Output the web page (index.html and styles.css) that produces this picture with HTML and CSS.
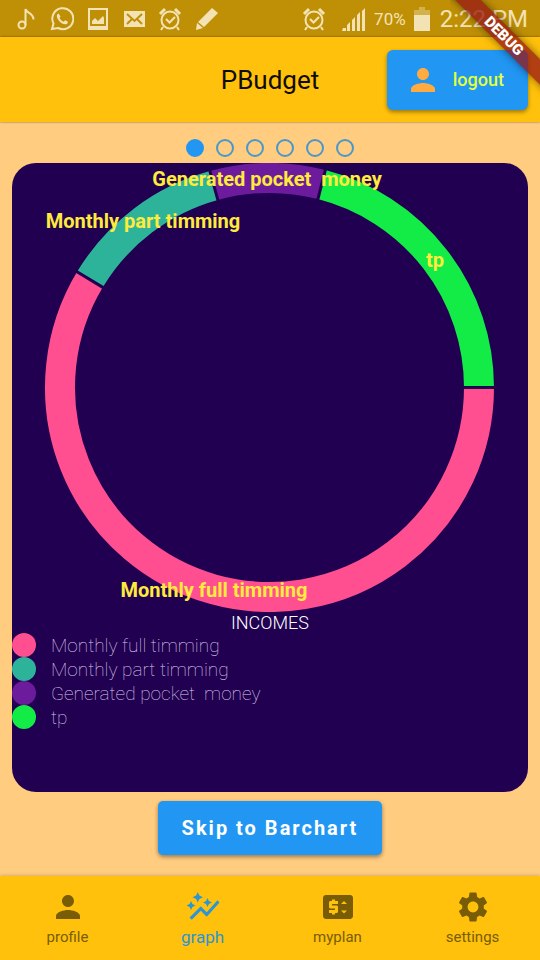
FILE: index.html
```html
<!DOCTYPE html>
<html lang="en">
<head>
<meta charset="utf-8">
<meta name="viewport" content="width=device-width, initial-scale=1">
<title>PBudget</title>
<link rel="stylesheet" href="styles.css">
</head>
<body>
<div class="status">
  <div class="status-left">
    <svg width="24" height="24" viewBox="0 0 24 24"><g fill="none" stroke="currentColor" stroke-width="2"><circle cx="8" cy="18" r="3.500"/><path d="M11.500 18V2c1 4.500 8 3.500 8 10.500"/></g></svg>
    <svg width="24" height="24" viewBox="0 0 24 24"><path d="M2 22l1.500-5.500A10.500 10.500 0 1 1 8 21z" fill="none" stroke="currentColor" stroke-width="2"/><path fill="currentColor" d="M8.500 6.500c-2 .7-2 3-1 4.900 1.700 3.200 4.300 5.500 7.500 5.900 1.700.1 2.900-1 2.900-2.600l-2.700-1.500-1.500 1.500c-2-.7-3.400-2.100-4.200-4l1.100-1.300z"/></svg>
    <svg width="24" height="24" viewBox="0 0 24 24"><path fill="currentColor" fill-rule="evenodd" d="M2 1h20v22H2zM4 3v16h16V3zM6 17v-3l3-3 3 3 5-5 1 2v6z"/></svg>
    <svg width="24" height="24" viewBox="0 0 24 24"><path fill="currentColor" d="M2 4h21v16H2z"/><path d="M5 7l7.500 7L20 7M5 17l5-5M20 17l-5-5" fill="none" stroke="#bf9006" stroke-width="2"/></svg>
    <svg width="24" height="24" viewBox="0 0 24 24"><use href="#alarm"/></svg>
    <svg width="24" height="24" viewBox="0 0 24 24"><path fill="currentColor" d="M18 1l6 5L10 20l-6-5zM3 16l6 5-7 2z"/></svg>
  </div>
  <div class="status-right">
    <svg class="alarm" width="24" height="24" viewBox="0 0 24 24"><g id="alarm" fill="none" stroke="currentColor" stroke-width="2"><circle cx="12" cy="13" r="8.500"/><path d="M8 12l3.500 3.500L17 10M5 20l-2 3M19 20l2 3"/><path stroke-width="3" d="M2 7l5-5M22 7l-5-5"/></g></svg>
    <svg width="24" height="24" viewBox="0 0 24 24"><path fill="currentColor" d="M1 21h3v3H0zM5 18l3-3v9H5zM10 13l3-3v14h-3zM15 8l3-3v19h-3zM20 4l3-3v23h-3z"/></svg>
    <span class="percent">70%</span>
    <svg width="16" height="24" viewBox="0 0 16 24"><path fill="currentColor" opacity=".4" d="M5 0h6v3h5v5H0V3h5z"/><path fill="currentColor" d="M0 8h16v16H0z"/></svg>
    <span class="time">2:22 PM</span>
  </div>
</div>
<div class="banner"><span class="ribbon">DEBUG</span></div>

<header class="appbar">
  <h1>PBudget</h1>
  <button class="logout" type="button">
    <svg width="36" height="36" viewBox="0 0 24 24"><path id="person" fill="currentColor" d="M12 12c2.210 0 4-1.790 4-4s-1.790-4-4-4-4 1.790-4 4 1.790 4 4 4zm0 2c-2.670 0-8 1.340-8 4v2h16v-2c0-2.660-5.330-4-8-4z"/></svg>
    <span>logout</span>
  </button>
</header>

<main>
  <div class="dots"><i class="on"></i><i></i><i></i><i></i><i></i><i></i></div>
  <section class="card">
    <svg id="chart" class="chart" viewBox="0 0 516 449" role="img" aria-label="Incomes">
      <g fill="none" stroke-width="30" transform="translate(257.500 224.500)">
        <path stroke="#13ec46" d="M209.500 0A209.500 209.500 0 0 0 52.100-202.920"/>
        <path stroke="#6d1b9d" d="M52.100-202.920A209.500 209.500 0 0 0-55.630-201.980"/>
        <path stroke="#2db39a" d="M-55.630-201.980A209.500 209.500 0 0 0-179.580-107.900"/>
        <path stroke="#ff4f91" d="M-179.580-107.900A209.500 209.500 0 1 0 209.500 0"/>
        <g stroke="#210051" stroke-width="3">
          <path d="M192 0h36"/>
          <path d="M192 0h36" transform="rotate(-75.600)"/>
          <path d="M192 0h36" transform="rotate(-105.400)"/>
          <path d="M192 0h36" transform="rotate(-149)"/>
        </g>
      </g>
      <g class="labels">
        <text x="255" y="23">Generated pocket  money</text>
        <text x="131" y="65">Monthly part timming</text>
        <text x="423" y="104">tp</text>
        <text x="202" y="434">Monthly full timming</text>
      </g>
    </svg>
    <h2>INCOMES</h2>
    <ul class="legend">
      <li class="pink">Monthly full timming</li>
      <li class="teal">Monthly part timming</li>
      <li class="purple">Generated pocket  money</li>
      <li class="green">tp</li>
    </ul>
  </section>
  <button class="skip" type="button">Skip to Barchart</button>
</main>

<nav>
  <a href="#profile"><svg width="36" height="36" viewBox="0 0 24 24"><use href="#person"/></svg><span>profile</span></a>
  <a href="#chart" class="active"><svg width="36" height="36" viewBox="0 0 24 24"><path fill="currentColor" d="M14.060 9.940L12 9l2.060-.94L15 6l.94 2.060L18 9l-2.060.94L15 12zM4 14l.94-2.060L7 11l-2.060-.94L4 8l-.94 2.060L1 11l2.060.94zM8.500 9l1.090-2.410L12 5.500 9.590 4.410 8.500 2 7.410 4.410 5 5.500l2.410 1.090zM4.500 20.500l6-6.010 4 4L23 8.930l-1.410-1.410-7.090 7.970-4-4L3 19z"/></svg><span>graph</span></a>
  <a href="#myplan"><svg width="36" height="36" viewBox="0 0 24 24"><path fill="currentColor" fill-rule="evenodd" d="M20 4H4c-1.110 0-1.990.89-1.990 2L2 18c0 1.110.89 2 2 2h16c1.110 0 2-.89 2-2V6c0-1.110-.89-2-2-2zM12 10H8v1h3c.55 0 1 .45 1 1v3c0 .55-.45 1-1 1h-1v1H8v-1H6v-2h4v-1H7c-.55 0-1-.45-1-1V9c0-.55.45-1 1-1h1V7h2v1h2zM16 16.250l-2-2h4zM14 10l2-2 2 2z"/></svg><span>myplan</span></a>
  <a href="#settings"><svg width="36" height="36" viewBox="0 0 24 24"><path fill="currentColor" d="M19.140 12.940c.04-.3.06-.61.06-.94 0-.32-.02-.64-.07-.94l2.030-1.580c.18-.14.23-.41.12-.61l-1.920-3.320c-.12-.22-.37-.29-.59-.22l-2.390.96c-.5-.38-1.030-.7-1.620-.94l-.36-2.540c-.04-.24-.24-.41-.48-.41h-3.840c-.24 0-.43.17-.47.41l-.36 2.540c-.59.24-1.130.57-1.620.94l-2.390-.96c-.22-.08-.47 0-.59.22L2.740 8.870c-.12.21-.08.47.12.61l2.030 1.580c-.05.3-.09.63-.09.94s.02.64.07.94l-2.030 1.580c-.18.14-.23.41-.12.61l1.920 3.320c.12.22.37.29.59.22l2.390-.96c.5.38 1.030.7 1.620.94l.36 2.540c.05.24.24.41.48.41h3.840c.24 0 .44-.17.47-.41l.36-2.540c.59-.24 1.130-.56 1.620-.94l2.390.96c.22.08.47 0 .59-.22l1.920-3.320c.12-.22.07-.47-.12-.61zM12 15.600c-1.980 0-3.600-1.620-3.600-3.600s1.620-3.600 3.600-3.600 3.600 1.620 3.600 3.600-1.620 3.600-3.600 3.600z"/></svg><span>settings</span></a>
</nav>
</body>
</html>
```
FILE: styles.css
```css
* { box-sizing: border-box; }
body {
  margin: 0;
  min-height: 100vh;
  display: flex;
  flex-direction: column;
  position: relative;
  background: #ffcc80;
  font-family: Roboto, "Liberation Sans", sans-serif;
}
svg { display: block; flex: none; }
h1, h2, ul { margin: 0; padding: 0; }
button { border: 0; font-family: inherit; }

.status {
  height: 37px;
  padding: 0 12px 0 14px;
  display: flex;
  align-items: center;
  justify-content: space-between;
  background: #bf9006;
  color: #f3e3b4;
}
.status-left { display: flex; gap: 12px; }
.status-right { display: flex; align-items: center; gap: 8px; white-space: nowrap; }
.alarm { margin-right: 8px; }
.percent { font-size: 17px; }
.time { font-size: 24px; line-height: 36px; margin-left: 2px; }

.banner {
  position: absolute;
  top: 0;
  right: 0;
  width: 90px;
  height: 110px;
  overflow: hidden;
  pointer-events: none;
  z-index: 2;
}
.ribbon {
  position: absolute;
  left: -16px;
  top: 27px;
  width: 140px;
  height: 18px;
  transform: rotate(45deg);
  background: rgba(150, 20, 20, 0.75);
  box-shadow: 0 0 9px rgba(0, 0, 0, 0.5);
  color: #fff;
  font-size: 15px;
  font-weight: 900;
  line-height: 18px;
  text-align: center;
}

.appbar {
  height: 85px;
  padding: 0 12px;
  display: grid;
  grid-template-columns: 1fr auto 1fr;
  align-items: center;
  background: #ffc10b;
  box-shadow: 0 0 2px rgba(0, 0, 0, 0.5);
}
.appbar h1 { grid-column: 2; font-size: 26px; font-weight: 400; color: #100c00; }
.logout {
  justify-self: end;
  height: 60px;
  padding: 0 24px 0 18px;
  display: flex;
  align-items: center;
  gap: 12px;
  border-radius: 6px;
  background: #2196f3;
  box-shadow: 0 2px 4px rgba(0, 0, 0, 0.4);
  color: #ffab40;
}
.logout span { font-size: 18px; font-weight: 500; color: #e2ff3c; }

main {
  flex: 1;
  padding: 17px 12px 21px;
  display: flex;
  flex-direction: column;
  align-items: center;
}
.dots { display: flex; gap: 12px; margin-bottom: 6px; }
.dots i {
  width: 18px;
  height: 18px;
  border: 2px solid #4a98cb;
  border-radius: 50%;
}
.dots .on { background: #2196f3; border-color: #2196f3; }
.card {
  flex: 1;
  width: 100%;
  margin-bottom: 9px;
  border-radius: 24px;
  background: #210051;
  overflow: hidden;
}
.chart { width: 100%; height: auto; }
.labels { fill: #ffeb3b; font-size: 20px; font-weight: 700; text-anchor: middle; }
.labels text { white-space: pre; }
.card h2 {
  color: #fff;
  font-size: 18px;
  font-weight: 300;
  line-height: 21px;
  text-align: center;
}
.legend { list-style: none; color: #dccbe8; font-size: 19px; font-weight: 100; }
.legend li { display: flex; align-items: center; gap: 15px; height: 24px; white-space: pre; }
.legend li::before { content: ""; width: 24px; height: 24px; border-radius: 50%; }
.pink::before { background: #ff4f91; }
.teal::before { background: #2db39a; }
.purple::before { background: #6d1b9d; }
.green::before { background: #13ec46; }
.skip {
  height: 54px;
  padding: 0 24px;
  border-radius: 5px;
  background: #2196f3;
  box-shadow: 0 2px 4px rgba(0, 0, 0, 0.4);
  color: #fff;
  font-size: 20px;
  font-weight: 700;
  letter-spacing: 2px;
}

nav {
  height: 84px;
  display: grid;
  grid-template-columns: repeat(4, 1fr);
  background: #ffc10b;
  box-shadow: 0 -1px 3px rgba(0, 0, 0, 0.15);
}
nav a {
  padding-top: 13px;
  display: flex;
  flex-direction: column;
  align-items: center;
  color: #785c06;
  font-size: 15px;
  line-height: 24px;
  text-decoration: none;
}
nav .active { color: #2e95d3; font-size: 17px; }
```
